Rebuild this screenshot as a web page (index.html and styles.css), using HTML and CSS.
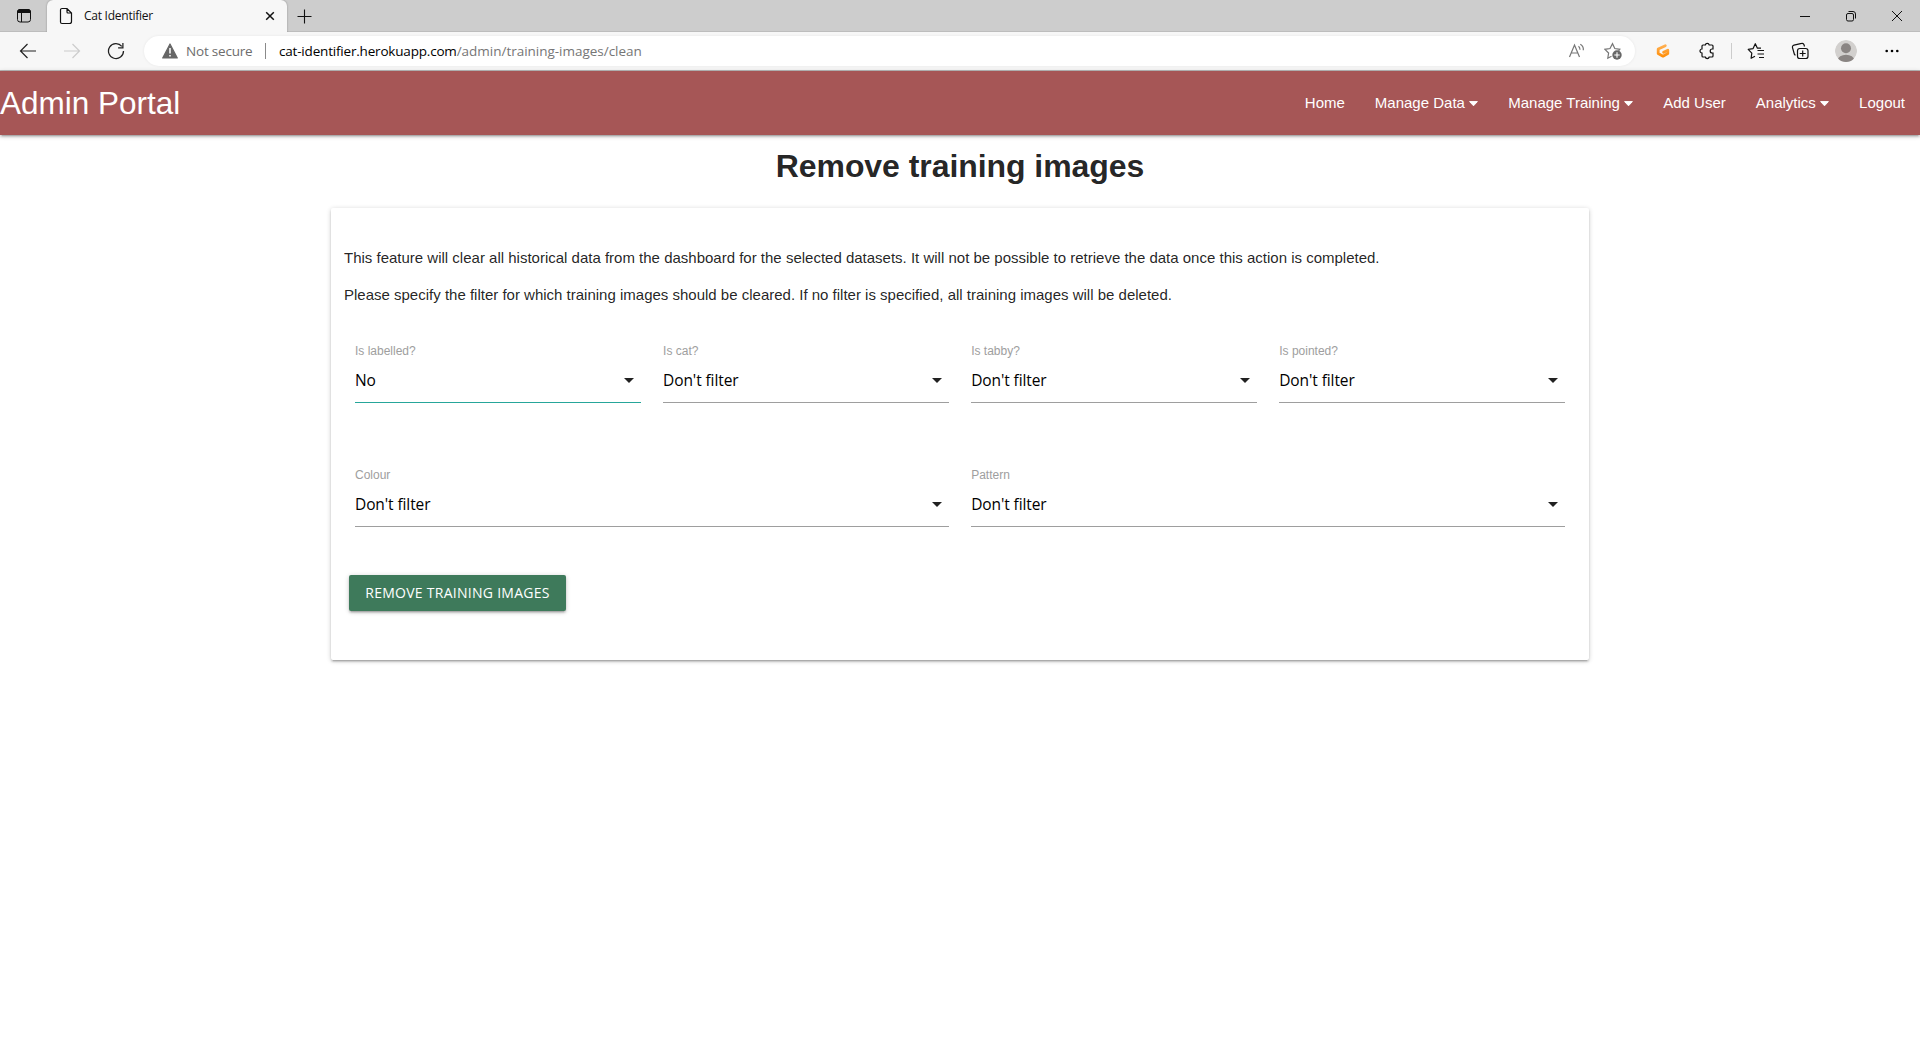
FILE: index.html
```html
<!DOCTYPE html>
<html lang="en">
<head>
<meta charset="utf-8">
<title>Cat Identifier</title>
<link rel="stylesheet" href="styles.css">
</head>
<body>
<div class="titlebar">
  <svg class="icon workspaces" width="16" height="16" viewBox="0 0 16 16"><rect x="1.5" y="1.5" width="13" height="12.5" rx="2.5" fill="none" stroke="#111"/><path d="M1.500 4.500V4a2.500 2.500 0 0 1 2.500-2.500h8A2.500 2.500 0 0 1 14.500 4v.5z" fill="#111" stroke="#111"/><path d="M5.500 5v9" stroke="#111"/></svg>
  <div class="tab">
    <svg class="icon" width="14" height="18" viewBox="0 0 14 18"><path d="M3 1.500h5l4.500 4.500v8.500a2 2 0 0 1-2 2H3a1.500 1.500 0 0 1-1.500-1.500V3A1.500 1.500 0 0 1 3 1.500zM8 1.500V5a1 1 0 0 0 1 1h3.500" fill="none" stroke="#111" stroke-width="1.200"/></svg>
    <span class="tab-title">Cat Identifier</span>
    <svg class="icon tab-close" width="10" height="10" viewBox="0 0 10 10"><path d="M1.200 1.200l7.600 7.600M8.800 1.200L1.200 8.800" stroke="#111" stroke-width="1.500"/></svg>
  </div>
  <svg class="icon new-tab" width="15" height="15" viewBox="0 0 15 15"><path d="M7.500 .5v14M.5 7.500h14" stroke="#111" stroke-width="1.100"/></svg>
  <div class="window-controls">
    <svg class="icon" width="12" height="12" viewBox="0 0 12 12"><path d="M1 6.500h10" stroke="#111"/></svg>
    <svg class="icon" width="12" height="12" viewBox="0 0 12 12"><rect x="1.500" y="3.500" width="7" height="7.500" rx="1.500" fill="none" stroke="#111"/><path d="M3.500 1.500H8A2.500 2.500 0 0 1 10.500 4v4.500" fill="none" stroke="#111"/></svg>
    <svg class="icon" width="12" height="12" viewBox="0 0 12 12"><path d="M1 1l10 10M11 1L1 11" stroke="#111"/></svg>
  </div>
</div>

<div class="toolbar">
  <div class="nav-buttons">
    <svg class="icon" width="18" height="16" viewBox="0 0 18 16"><path d="M8.500 1L1.500 8l7 7M1.500 8H17" fill="none" stroke="#222" stroke-width="1.200"/></svg>
    <svg class="icon" width="18" height="16" viewBox="0 0 18 16"><path d="M9.500 1l7 7-7 7M16.500 8H1" fill="none" stroke="#ccc" stroke-width="1.200"/></svg>
    <svg class="icon" width="18" height="18" viewBox="0 0 18 18"><path d="M16.500 9A7.500 7.500 0 1 1 14.800 4.300M15.900 1v4.800h-4.800" fill="none" stroke="#222" stroke-width="1.250"/></svg>
  </div>
  <div class="address">
    <svg class="icon" width="16" height="16" viewBox="0 0 16 16"><path d="M8 1l7.300 14H.7z" fill="#666" stroke="#666" stroke-width="1.200" stroke-linejoin="round"/><path d="M8 5v5.500M8 12v1.500" stroke="#fff" stroke-width="1.500"/></svg>
    <span class="security">Not secure</span>
    <span class="address-rule"></span>
    <span class="url"><span class="host">cat-identifier.herokuapp.com</span><span class="path">/admin/training-images/clean</span></span>
    <svg class="icon read-aloud" width="18" height="16" viewBox="0 0 18 16"><path d="M1.500 14L6.500 2l5 12M3.200 10h6.600M10.500 3.200q1.500 1.300 1.500 3.500M12.300 1.200q3.500 2 3 6" fill="none" stroke="#767676" stroke-width="1.200"/></svg>
    <svg class="icon" width="18" height="18" viewBox="0 0 18 18"><path d="M7.500 14.200l-3.700 2 .8-5.200L1 7.300l5-.8L8.500 1.700 10.800 6.500l5 .8-1.200 1.500" fill="none" stroke="#767676" stroke-width="1.200"/><circle cx="13" cy="13" r="4.700" fill="#666"/><path d="M13 10.300v5.400M10.300 13h5.400" stroke="#fff" stroke-width="1.100"/></svg>
  </div>
  <div class="extensions">
    <svg class="icon ext-g" width="14" height="16" viewBox="0 0 14 16"><defs><linearGradient id="g" gradientUnits="userSpaceOnUse" x1="0" y1="1" x2="0" y2="15"><stop offset="0" stop-color="#ffb45b"/><stop offset="1" stop-color="#ff8a00"/></linearGradient></defs><path d="M9.300 2.700L2.200 6v4.600L7 13.200l4.800-2.600V7.200L7.600 9.300" fill="none" stroke="url(#g)" stroke-width="2.800" stroke-linecap="round" stroke-linejoin="round"/></svg>
    <svg class="icon ext-puzzle" width="16" height="18" viewBox="0 0 16 18"><path d="M4 3h2.300a2 2 0 0 1 3.900 0H13a1 1 0 0 1 1 1v3h-.8a2 2 0 0 0 0 4h.8v3a1 1 0 0 1-1 1h-2.800a2 2 0 0 1-3.900 0H4a1 1 0 0 1-1-1v-3a2 2 0 0 1 0-4V4a1 1 0 0 1 1-1z" fill="none" stroke="#111" stroke-width="1.200"/></svg>
    <span class="tool-rule"></span>
    <svg class="icon fav" width="18" height="18" viewBox="0 0 18 18"><path d="M8 14.300l-3.900 2 .7-5.200L1.200 7.400l4.900-.8L8.300 1.700l2.100 4.500H14" fill="none" stroke="#111" stroke-width="1.200" stroke-linejoin="round"/><path d="M10.500 8.500h6.500M10.500 12h6.500M12 15.500h5" stroke="#111" stroke-width="1.200"/></svg>
    <svg class="icon coll" width="18" height="18" viewBox="0 0 18 18"><rect x="6.500" y="6.500" width="10.500" height="10" rx="2.300" fill="none" stroke="#111" stroke-width="1.200"/><path d="M11.700 8.500v6M8.700 11.500h6M13.500 4.500l-.5-1.800a2 2 0 0 0-2.400-1.300L3 3.100a2 2 0 0 0-1.500 2.500l1.800 6.400a2 2 0 0 0 1.200 1.300" fill="none" stroke="#111" stroke-width="1.200"/></svg>
    <svg class="icon avatar" width="22" height="22" viewBox="0 0 22 22"><defs><clipPath id="round"><circle cx="11" cy="11" r="11"/></clipPath></defs><g clip-path="url(#round)"><circle cx="11" cy="11" r="11" fill="#d2d0ce"/><circle cx="11" cy="8.300" r="5" fill="#8a8583"/><ellipse cx="11" cy="20" rx="8.200" ry="5.300" fill="#8a8583"/></g></svg>
    <svg class="icon more" width="14" height="4" viewBox="0 0 14 4"><circle cx="1.700" cy="2" r="1.300"/><circle cx="7" cy="2" r="1.300"/><circle cx="12.300" cy="2" r="1.300"/></svg>
  </div>
</div>

<nav class="navbar">
  <div class="brand">Admin Portal</div>
  <div class="menu">
    <a>Home</a>
    <a>Manage Data<svg class="caret" width="9" height="6" viewBox="0 0 9 6"><path d="M.6.600h7.800L4.500 4.800z" fill="#fff" stroke="#fff" stroke-linejoin="round"/></svg></a>
    <a>Manage Training<svg class="caret" width="9" height="6" viewBox="0 0 9 6"><path d="M.6.600h7.800L4.500 4.800z" fill="#fff" stroke="#fff" stroke-linejoin="round"/></svg></a>
    <a>Add User</a>
    <a>Analytics<svg class="caret" width="9" height="6" viewBox="0 0 9 6"><path d="M.6.600h7.800L4.500 4.800z" fill="#fff" stroke="#fff" stroke-linejoin="round"/></svg></a>
    <a>Logout</a>
  </div>
</nav>

<main>
  <h1>Remove training images</h1>
  <section class="card">
    <p>This feature will clear all historical data from the dashboard for the selected datasets. It will not be possible to retrieve the data once this action is completed.</p>
    <p>Please specify the filter for which training images should be cleared. If no filter is specified, all training images will be deleted.</p>
    <div class="filters">
      <div class="field active"><div class="label">Is labelled?</div><div class="select"><span>No</span><svg width="24" height="24" viewBox="0 0 24 24"><path d="M7 10l5 5 5-5z"/></svg></div></div>
      <div class="field"><div class="label">Is cat?</div><div class="select"><span>Don't filter</span><svg width="24" height="24" viewBox="0 0 24 24"><path d="M7 10l5 5 5-5z"/></svg></div></div>
      <div class="field"><div class="label">Is tabby?</div><div class="select"><span>Don't filter</span><svg width="24" height="24" viewBox="0 0 24 24"><path d="M7 10l5 5 5-5z"/></svg></div></div>
      <div class="field"><div class="label">Is pointed?</div><div class="select"><span>Don't filter</span><svg width="24" height="24" viewBox="0 0 24 24"><path d="M7 10l5 5 5-5z"/></svg></div></div>
      <div class="field wide"><div class="label">Colour</div><div class="select"><span>Don't filter</span><svg width="24" height="24" viewBox="0 0 24 24"><path d="M7 10l5 5 5-5z"/></svg></div></div>
      <div class="field wide"><div class="label">Pattern</div><div class="select"><span>Don't filter</span><svg width="24" height="24" viewBox="0 0 24 24"><path d="M7 10l5 5 5-5z"/></svg></div></div>
    </div>
    <button class="remove" type="button">Remove training images</button>
  </section>
</main>
</body>
</html>
```
FILE: styles.css
```css
* { box-sizing: border-box; }
body {
  margin: 0;
  height: 1040px;
  overflow: hidden;
  background: #fff;
  color: rgba(0, 0, 0, .87);
  font: 15px/22.5px "Liberation Sans", Arial, sans-serif;
}
.icon { display: block; flex: none; }

/* Browser frame */
.titlebar, .toolbar { font-family: "Open Sans", "Noto Sans", sans-serif; }
.titlebar {
  display: flex;
  align-items: center;
  height: 32px;
  background: #cdcdcd;
  box-shadow: inset 0 -1px #bdbdbd;
}
.workspaces { margin-left: 16px; }
.tab {
  display: flex;
  align-items: center;
  width: 240px;
  height: 32px;
  margin-left: 15px;
  padding: 0 12px;
  border-radius: 6px 6px 0 0;
  background: #f7f7f7;
  box-shadow: 0 0 2px rgba(0, 0, 0, .35);
  clip-path: inset(0 -3px 0 -3px);
}
.tab-title {
  margin-left: 11px;
  color: #111;
  font-size: 12px;
  letter-spacing: -.25px;
}
.tab-close { margin-left: auto; }
.new-tab { margin-left: 10px; }
.window-controls {
  display: flex;
  gap: 34px;
  margin-left: auto;
  padding-right: 17px;
}
.toolbar {
  display: flex;
  align-items: center;
  height: 39px;
  background: #f7f7f7;
  border-bottom: 1px solid #b9b9b9;
}
.nav-buttons {
  display: flex;
  align-items: center;
  gap: 26px;
  width: 144px;
  padding-left: 19px;
}
.address {
  display: flex;
  align-items: center;
  width: 1491px;
  height: 30px;
  padding: 0 13px 0 18px;
  border-radius: 15px;
  background: #fff;
  box-shadow: 0 0 3px rgba(0, 0, 0, .07);
  font-size: 13.5px;
}
.security {
  width: 79px;
  padding-left: 8px;
  color: #6d6d6d;
  letter-spacing: -.2px;
  white-space: nowrap;
}
.address-rule { width: 1px; height: 16px; margin: 0 13px 0 8px; background: #8a8a8a; }
.host { color: #000; letter-spacing: -.19px; }
.path { color: #767676; letter-spacing: -.02px; }
.read-aloud { margin-left: auto; margin-right: 18px; }
.extensions { display: flex; align-items: center; }
.ext-g { margin-left: 21px; }
.ext-puzzle { margin-left: 29px; }
.tool-rule { width: 1px; height: 16px; margin-left: 16px; background: #ccc; }
.fav { margin-left: 15px; }
.coll { margin-left: 26px; }
.avatar { margin-left: 26px; }
.more { margin-left: 28px; }

/* Site navigation */
.navbar {
  display: flex;
  justify-content: space-between;
  align-items: center;
  height: 64px;
  background: #a65656;
  color: #fff;
  box-shadow: 0 2px 2px 0 rgba(0, 0, 0, .14), 0 3px 1px -2px rgba(0, 0, 0, .12), 0 1px 5px 0 rgba(0, 0, 0, .2);
}
.brand { font-size: 31.5px; line-height: 64px; }
.menu { display: flex; line-height: 64px; }
.menu a { display: flex; align-items: center; padding: 0 15px; }
.caret { margin: 2px 0 0 4.3px; }

/* Page content */
h1 {
  margin: 13px 0 0;
  font-size: 32px;
  line-height: 36px;
  letter-spacing: -.06px;
  text-align: center;
}
.card {
  width: 1258px;
  height: 452px;
  margin: 24px 0 0 331px;
  padding: 39px 24px 0 13px;
  border-radius: 2px;
  box-shadow: 0 2px 2px 0 rgba(0, 0, 0, .14), 0 3px 1px -2px rgba(0, 0, 0, .12), 0 1px 5px 0 rgba(0, 0, 0, .2);
}
p { margin: 0 0 14.5px; white-space: nowrap; }
.filters {
  display: grid;
  grid-template-columns: repeat(4, 1fr);
  column-gap: 22.3px;
  row-gap: 54px;
  margin-top: 26.5px;
  padding-left: 11px;
}
.field { height: 70px; }
.wide { grid-column: span 2; }
.label { height: 25px; font-size: 12px; line-height: 36px; color: #9e9e9e; }
.select {
  display: flex;
  align-items: center;
  justify-content: space-between;
  height: 45px;
  border-bottom: 1px solid #9e9e9e;
  color: #000;
  font: 15.5px/44px "Open Sans", "Noto Sans", sans-serif;
  letter-spacing: -.1px;
}
.select svg { fill: rgba(0, 0, 0, .87); }
.active .select { border-color: #26a69a; }
.remove {
  display: block;
  width: 217px;
  height: 36px;
  margin: 48px 0 0 5px;
  padding: 0;
  border: 0;
  border-radius: 2px;
  background: #3e7a5b;
  color: #fff;
  font: 14px/36px "Open Sans", "Noto Sans", sans-serif;
  letter-spacing: .27px;
  text-transform: uppercase;
  box-shadow: 0 2px 2px 0 rgba(0, 0, 0, .14), 0 3px 1px -2px rgba(0, 0, 0, .12), 0 1px 5px 0 rgba(0, 0, 0, .2);
}
```
